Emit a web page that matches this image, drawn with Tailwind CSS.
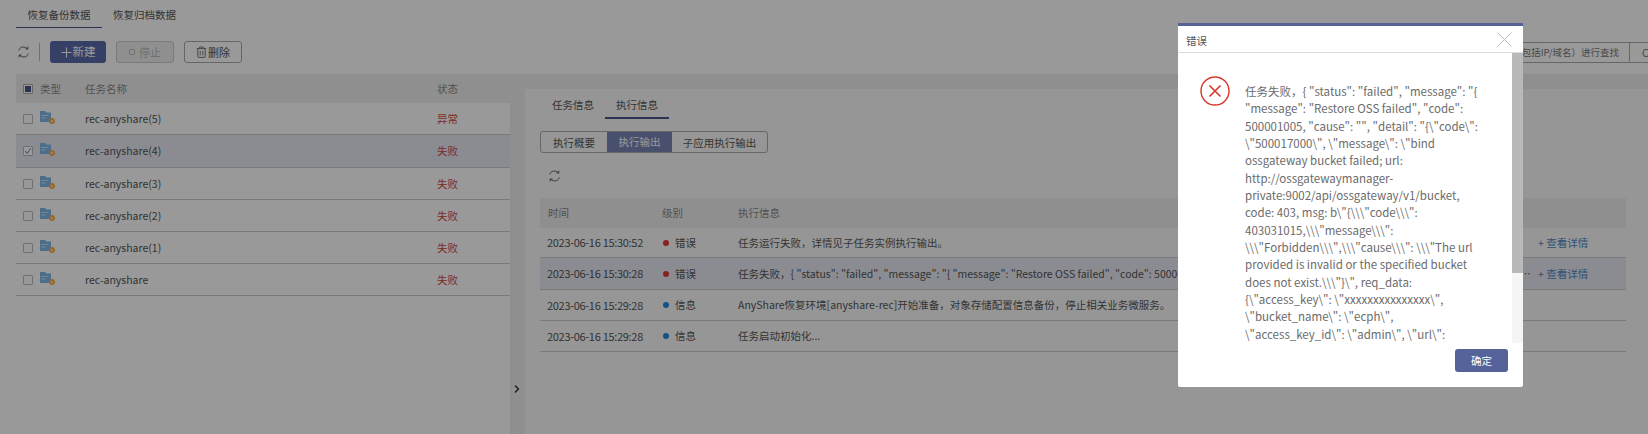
<!DOCTYPE html>
<html lang="zh">
<head>
    <meta charset="UTF-8">
    <title>恢复备份数据</title>
    <script src="https://cdn.jsdelivr.net/npm/@tailwindcss/browser@4"></script>
</head>
<body class="bg-white">
<div class="relative w-[1648px] h-[434px] overflow-hidden bg-white text-[10.5px] text-[#555] font-['Noto_Sans_CJK_SC','Noto_Sans',sans-serif]">

    <!-- top tabs -->
    <div class="flex h-[28px] ml-4 text-[#555]">
        <div class="w-[86px] h-[28px] border-b border-[#4a5488] text-center text-[10.5px] leading-[30px]">恢复备份数据</div>
        <div class="ml-[11px] text-[10.5px] leading-[30px]">恢复归档数据</div>
    </div>

    <!-- toolbar -->
    <div class="flex items-center h-[46px] pt-[2px] pl-[18px]">
        <svg class="w-[11px] h-[14px] text-[#555]" viewBox="0 0 11 14" fill="none" stroke="currentColor" stroke-width="0.9"><path d="M0.8 5.4C1.4 2.8 4 1.4 6.6 2.2c1 .3 2 .8 3.2 1.8M9.8 1.6V4H7.4"/><path d="M10.2 8.6C9.6 11.2 7 12.6 4.4 11.8c-1-.3-2-.8-3.2-1.8M1.2 12.4V10h2.4"/></svg>
        <div class="w-px h-[18px] bg-[#bbb] ml-[10px]"></div>
        <div class="flex items-center justify-center ml-[10px] w-[56px] h-[22px] rounded-[3px] bg-[#5b6aa8] text-white text-[11.5px]">
            <svg class="w-[11px] h-[11px] mr-[1px]" viewBox="0 0 11 11" stroke="currentColor" stroke-width="1.1"><path d="M5.5 0.5v10M0.5 5.5h10"/></svg>新建
        </div>
        <div class="flex items-center justify-center ml-[10px] w-[58px] h-[22px] rounded-[3px] bg-[#eee] border border-[#ccc] text-[#bbb] text-[11px]">
            <span class="w-[6px] h-[6px] border border-[#bbb] rounded-[1px] mr-[4px]"></span>停止
        </div>
        <div class="flex items-center justify-center ml-[10px] w-[58px] h-[22px] rounded-[3px] bg-white border border-[#aaa] text-[#555] text-[11px]">
            <svg class="w-[11px] h-[12px] mr-[1px]" viewBox="0 0 11 12" fill="none" stroke="currentColor" stroke-width="0.8"><path d="M0.8 2.6h9.4M3.6 2.4V1h3.8v1.4M1.8 2.8v7.4c0 .7.4 1.2 1.1 1.2h5.2c.7 0 1.1-.5 1.1-1.2V2.8M4.2 4.8v4.6M6.8 4.8v4.6"/></svg>删除
        </div>
        <div class="ml-auto flex items-center h-[21px] w-[150px] border-y border-[#aaa] text-[#777] text-[9.5px]">
            <div class="flex-1 text-right pr-[10px] whitespace-nowrap">（包括IP/域名）进行查找</div>
            <div class="w-[19px] h-full border-l border-[#aaa] pl-[12px] leading-[19px] text-[10.5px]">C</div>
        </div>
    </div>

    <div class="flex h-[360px]">
        <!-- left table -->
        <div class="w-[494px] ml-4">
            <div class="flex items-center h-[29px] bg-[#efefef] text-[#888] text-[10.5px]">
                <span class="flex items-center justify-center w-[10px] h-[10px] ml-[7px] border border-[#aaa] rounded-[1px] bg-white"><span class="w-[6px] h-[6px] bg-[#4a5488]"></span></span>
                <span class="ml-[7px] w-[45px]">类型</span>
                <span class="w-[352px]">任务名称</span>
                <span>状态</span>
            </div>
            <div class="flex items-center h-[32px] border-b border-[#ccc]">
                <span class="w-[10px] h-[10px] ml-[7px] border border-[#bbb] rounded-[1px] bg-white"></span>
                <svg class="ml-[7px] w-[15px] h-[14px] mb-[2px]" viewBox="0 0 15 14"><path d="M0 0h5l1.5 1.5H11V11H0z" fill="#7fb8e8"/><path d="M1.5 4.5h7M1.5 7h4" stroke="#e0eefa" stroke-width="0.8"/><circle cx="12" cy="10" r="3" fill="#f5b050"/><circle cx="12" cy="10" r="1" fill="#ffe9c8"/></svg>
                <span class="ml-[30px] w-[352px]">rec-anyshare(5)</span>
                <span class="text-[#d2473a]">异常</span>
            </div>
            <div class="flex items-center h-[33px] border-b border-[#ccc] bg-[#e8eaf3]">
                <span class="flex items-center justify-center w-[10px] h-[10px] ml-[7px] border border-[#bbb] rounded-[1px] bg-white">
                    <svg class="w-[10px] h-[10px]" viewBox="0 0 10 10" fill="none" stroke="#4a5488" stroke-width="1"><path d="M1.5 5l2.5 3L8.5 1.5"/></svg>
                </span>
                <svg class="ml-[7px] w-[15px] h-[14px] mb-[2px]" viewBox="0 0 15 14"><path d="M0 0h5l1.5 1.5H11V11H0z" fill="#7fb8e8"/><path d="M1.5 4.5h7M1.5 7h4" stroke="#e0eefa" stroke-width="0.8"/><circle cx="12" cy="10" r="3" fill="#f5b050"/><circle cx="12" cy="10" r="1" fill="#ffe9c8"/></svg>
                <span class="ml-[30px] w-[352px]">rec-anyshare(4)</span>
                <span class="text-[#d2473a]">失败</span>
            </div>
            <div class="flex items-center h-[32px] border-b border-[#ccc]">
                <span class="w-[10px] h-[10px] ml-[7px] border border-[#bbb] rounded-[1px] bg-white"></span>
                <svg class="ml-[7px] w-[15px] h-[14px] mb-[2px]" viewBox="0 0 15 14"><path d="M0 0h5l1.5 1.5H11V11H0z" fill="#7fb8e8"/><path d="M1.5 4.5h7M1.5 7h4" stroke="#e0eefa" stroke-width="0.8"/><circle cx="12" cy="10" r="3" fill="#f5b050"/><circle cx="12" cy="10" r="1" fill="#ffe9c8"/></svg>
                <span class="ml-[30px] w-[352px]">rec-anyshare(3)</span>
                <span class="text-[#d2473a]">失败</span>
            </div>
            <div class="flex items-center h-[32px] border-b border-[#ccc]">
                <span class="w-[10px] h-[10px] ml-[7px] border border-[#bbb] rounded-[1px] bg-white"></span>
                <svg class="ml-[7px] w-[15px] h-[14px] mb-[2px]" viewBox="0 0 15 14"><path d="M0 0h5l1.5 1.5H11V11H0z" fill="#7fb8e8"/><path d="M1.5 4.5h7M1.5 7h4" stroke="#e0eefa" stroke-width="0.8"/><circle cx="12" cy="10" r="3" fill="#f5b050"/><circle cx="12" cy="10" r="1" fill="#ffe9c8"/></svg>
                <span class="ml-[30px] w-[352px]">rec-anyshare(2)</span>
                <span class="text-[#d2473a]">失败</span>
            </div>
            <div class="flex items-center h-[32px] border-b border-[#ccc]">
                <span class="w-[10px] h-[10px] ml-[7px] border border-[#bbb] rounded-[1px] bg-white"></span>
                <svg class="ml-[7px] w-[15px] h-[14px] mb-[2px]" viewBox="0 0 15 14"><path d="M0 0h5l1.5 1.5H11V11H0z" fill="#7fb8e8"/><path d="M1.5 4.5h7M1.5 7h4" stroke="#e0eefa" stroke-width="0.8"/><circle cx="12" cy="10" r="3" fill="#f5b050"/><circle cx="12" cy="10" r="1" fill="#ffe9c8"/></svg>
                <span class="ml-[30px] w-[352px]">rec-anyshare(1)</span>
                <span class="text-[#d2473a]">失败</span>
            </div>
            <div class="flex items-center h-[32px] border-b border-[#ccc]">
                <span class="w-[10px] h-[10px] ml-[7px] border border-[#bbb] rounded-[1px] bg-white"></span>
                <svg class="ml-[7px] w-[15px] h-[14px] mb-[2px]" viewBox="0 0 15 14"><path d="M0 0h5l1.5 1.5H11V11H0z" fill="#7fb8e8"/><path d="M1.5 4.5h7M1.5 7h4" stroke="#e0eefa" stroke-width="0.8"/><circle cx="12" cy="10" r="3" fill="#f5b050"/><circle cx="12" cy="10" r="1" fill="#ffe9c8"/></svg>
                <span class="ml-[30px] w-[352px]">rec-anyshare</span>
                <span class="text-[#d2473a]">失败</span>
            </div>
        </div>

        <!-- right side -->
        <div class="relative flex-1 bg-[#efefef] pt-[15px] pl-[15px]">
            <svg class="absolute left-[4px] top-[311px] w-[6px] h-[8px]" viewBox="0 0 6 8" fill="none" stroke="#222" stroke-width="1.2"><path d="M1 0.5L4.5 4 1 7.5"/></svg>
            <div class="h-full bg-[#fbfbfb] pl-[15px] pr-[22px]">
                <div class="flex h-[30px] pl-[12px]">
                    <div class="w-[53px] leading-[32px] text-[10.5px]">任务信息</div>
                    <div class="w-[64px] text-center border-b-2 border-[#4a5488] leading-[32px] text-[10.5px]">执行信息</div>
                </div>
                <div class="flex h-[22px] mt-[12px] w-[228px] rounded-[3px] border border-[#aaa] text-[10.5px] overflow-hidden">
                    <div class="w-[66px] text-center leading-[21px]">执行概要</div>
                    <div class="w-[65px] text-center leading-[20px] bg-[#7a86b8] text-white">执行输出</div>
                    <div class="flex-1 text-center leading-[21px]">子应用执行输出</div>
                </div>
                <div class="h-[45px] flex items-center pl-[9px]">
                    <svg class="w-[11px] h-[14px] text-[#555]" viewBox="0 0 11 14" fill="none" stroke="currentColor" stroke-width="0.9"><path d="M0.8 5.4C1.4 2.8 4 1.4 6.6 2.2c1 .3 2 .8 3.2 1.8M9.8 1.6V4H7.4"/><path d="M10.2 8.6C9.6 11.2 7 12.6 4.4 11.8c-1-.3-2-.8-3.2-1.8M1.2 12.4V10h2.4"/></svg>
                </div>
                <div class="flex items-center h-[30px] bg-[#efefef] text-[#888]">
                    <span class="w-[122px] pl-[8px]">时间</span>
                    <span class="w-[76px]">级别</span>
                    <span>执行信息</span>
                </div>
                <div class="flex items-center h-[30px] border-b border-[#ccc]">
                    <span class="w-[122px] pl-[7px] text-[11px] tracking-[-0.3px] whitespace-nowrap">2023-06-16 15:30:52</span>
                    <span class="flex items-center w-[76px] pl-[1px]"><span class="w-[6px] h-[6px] rounded-full bg-[#e53935] mr-[6px]"></span>错误</span>
                    <span class="w-[796px] mr-[4px] truncate">任务运行失败，详情见子任务实例执行输出。</span>
                    <span class="text-[#4f86c6]">+ 查看详情</span>
                </div>
                <div class="flex items-center h-[32px] border-b border-[#ccc] bg-[#e8eaf3]">
                    <span class="w-[122px] pl-[7px] text-[11px] tracking-[-0.3px] whitespace-nowrap">2023-06-16 15:30:28</span>
                    <span class="flex items-center w-[76px] pl-[1px]"><span class="w-[6px] h-[6px] rounded-full bg-[#e53935] mr-[6px]"></span>错误</span>
                    <span class="w-[796px] mr-[4px] truncate">任务失败，{ "status": "failed", "message": "{ "message": "Restore OSS failed", "code": 500001005, "cause": "", "detail": "{\"code\": \"500017000\", \"message\": \"bind ossgateway bucket failed; url: http://ossgatewaymanager-private:9002/api/ossgateway/v1/bucket, code: 403, msg: b\"{\\\"code\\\": 403031015,\\\"message\\\": \\\"Forbidden\\\",\\\"cause\\\": \\\"The url provided is invalid</span>
                    <span class="text-[#4f86c6]">+ 查看详情</span>
                </div>
                <div class="flex items-center h-[31px] border-b border-[#ccc]">
                    <span class="w-[122px] pl-[7px] text-[11px] tracking-[-0.3px] whitespace-nowrap">2023-06-16 15:29:28</span>
                    <span class="flex items-center w-[76px] pl-[1px]"><span class="w-[6px] h-[6px] rounded-full bg-[#1e88e5] mr-[6px]"></span>信息</span>
                    <span>AnyShare恢复环境[anyshare-rec]开始准备，对象存储配置信息备份，停止相关业务微服务。</span>
                </div>
                <div class="flex items-center h-[31px] border-b border-[#ccc]">
                    <span class="w-[122px] pl-[7px] text-[11px] tracking-[-0.3px] whitespace-nowrap">2023-06-16 15:29:28</span>
                    <span class="flex items-center w-[76px] pl-[1px]"><span class="w-[6px] h-[6px] rounded-full bg-[#1e88e5] mr-[6px]"></span>信息</span>
                    <span>任务启动初始化...</span>
                </div>
            </div>
        </div>
    </div>

    <!-- modal mask -->
    <div class="absolute inset-0 bg-black/40"></div>

    <!-- error dialog -->
    <div class="absolute left-[1178px] top-[23px] w-[345px] h-[364px] bg-white border-t-[3px] border-[#56639a] rounded-b-[2px] flex flex-col">
        <div class="flex items-center justify-between h-[27px] border-b border-[#ddd] pl-2 pr-[11px] text-[#555] text-[10.5px] shrink-0">
            <span class="pt-[3px]">错误</span>
            <svg class="w-[15px] h-[15px]" viewBox="0 0 15 15" fill="none" stroke="#bbb" stroke-width="1"><path d="M0.5 0.5l14 14M14.5 0.5l-14 14"/></svg>
        </div>
        <div class="flex flex-1 min-h-0">
            <div class="flex-1 flex flex-col min-w-0">
                <div class="flex h-[295px] overflow-hidden">
                    <svg class="ml-[22px] mt-[23px] w-[30px] h-[30px] shrink-0" viewBox="0 0 30 30" fill="none" stroke="#d9362b"><circle cx="15" cy="15" r="14" stroke-width="1.4"/><path d="M9.5 9.5l11 11M20.5 9.5l-11 11" stroke-width="1.6"/></svg>
                    <div class="ml-[15px] mt-[30px] text-[11.5px] leading-[17.35px] text-[#6b6b6b] whitespace-nowrap">
                        任务失败，{ "status": "failed", "message": "{<br>
                        "message": "Restore OSS failed", "code":<br>
                        500001005, "cause": "", "detail": "{\"code\":<br>
                        \"500017000\", \"message\": \"bind<br>
                        ossgateway bucket failed; url:<br>
                        http://ossgatewaymanager-<br>
                        private:9002/api/ossgateway/v1/bucket,<br>
                        code: 403, msg: b\"{\\\"code\\\":<br>
                        403031015,\\\"message\\\":<br>
                        \\\"Forbidden\\\",\\\"cause\\\": \\\"The url<br>
                        provided is invalid or the specified bucket<br>
                        does not exist.\\\"}\", req_data:<br>
                        {\"access_key\": \"xxxxxxxxxxxxxxx\",<br>
                        \"bucket_name\": \"ecph\",<br>
                        \"access_key_id\": \"admin\", \"url\":
                    </div>
                </div>
                <div class="flex-1 flex justify-end items-end pb-[15px] pr-[4px]">
                    <div class="w-[53px] h-[23px] rounded-[3px] bg-[#56639a] text-white text-[10.5px] text-center leading-[23px]">确定</div>
                </div>
            </div>
            <div class="w-[11px] h-[290px] bg-[#f5f5f5] shrink-0">
                <div class="h-[220px] bg-[#b9b9b9]"></div>
            </div>
        </div>
    </div>
</div>
</body>
</html>
